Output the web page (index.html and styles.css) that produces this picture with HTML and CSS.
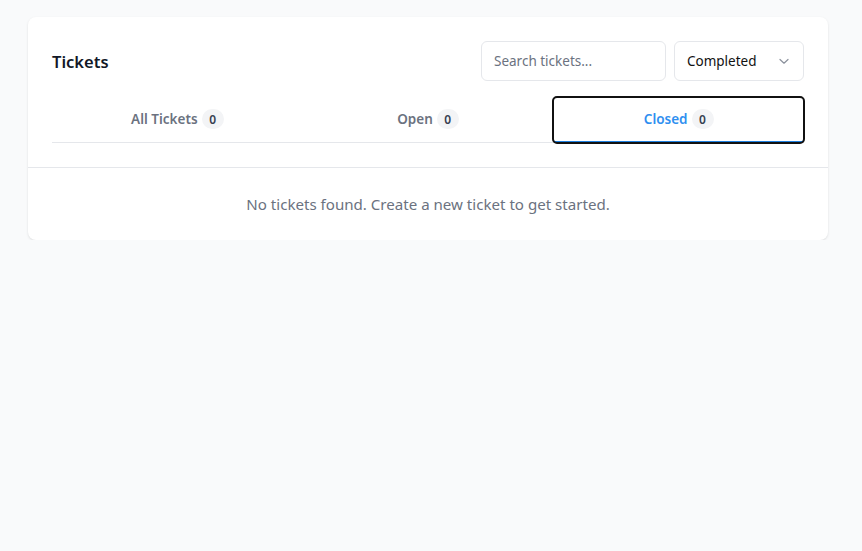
FILE: index.html
```html
<!DOCTYPE html>
<html lang="en">
<head>
<meta charset="utf-8">
<title>Tickets</title>
<link rel="stylesheet" href="styles.css">
</head>
<body>
<main class="page">
  <section class="card">
    <div class="card-header">
      <div class="toolbar">
        <h1 class="title">Tickets</h1>
        <div class="controls">
          <input class="search" type="text" placeholder="Search tickets...">
          <div class="select">
            <span>Completed</span>
            <svg class="chevron" width="12" height="12" viewBox="0 0 12 12" fill="none"><path d="M2 4.5 6 8.2l4-3.7" stroke="#8b919c" stroke-width="1.2" stroke-linecap="round" stroke-linejoin="round"/></svg>
          </div>
        </div>
      </div>
      <nav class="tabs">
        <button class="tab">All Tickets <span class="badge">0</span></button>
        <button class="tab">Open <span class="badge">0</span></button>
        <button class="tab active">Closed <span class="badge">0</span></button>
      </nav>
    </div>
    <div class="empty">No tickets found. Create a new ticket to get started.</div>
  </section>
</main>
</body>
</html>
```
FILE: styles.css
```css
* { box-sizing: border-box; }
html, body { margin: 0; padding: 0; }
body {
  background: #f9fafb;
  font-family: "Noto Sans", "Open Sans", sans-serif;
  color: #111827;
}
.page { padding: 17px 34px 0 28px; }
.card {
  width: 800px;
  background: #fff;
  border-radius: 8px;
  box-shadow: 0 1px 3px rgba(0,0,0,0.08), 0 1px 2px rgba(0,0,0,0.04);
}
.card-header {
  padding: 24px 24px 24px;
  border-bottom: 1px solid #e5e7eb;
}
.toolbar {
  display: flex;
  align-items: center;
  justify-content: space-between;
  height: 40px;
}
.title {
  margin: 0;
  font-size: 16.5px;
  line-height: 1;
  padding-top: 2px;
  font-weight: 600;
  color: #111827;
}
.controls { display: flex; gap: 8px; }
.search {
  width: 185px;
  height: 40px;
  border: 1px solid #e5e7eb;
  border-radius: 6px;
  padding: 0 12px;
  font-family: inherit;
  font-size: 13.5px;
  color: #111827;
  outline: none;
}
.search::placeholder { color: #6b7280; }
.select {
  width: 130px;
  height: 40px;
  border: 1px solid #e5e7eb;
  border-radius: 6px;
  padding: 0 13px 0 12px;
  display: flex;
  align-items: center;
  justify-content: space-between;
  font-size: 13.5px;
  color: #111;
}
.tabs {
  margin-top: 16px;
  display: grid;
  grid-template-columns: repeat(3, 1fr);
  border-bottom: 1px solid #e5e7eb;
}
.tab {
  height: 46px;
  background: none;
  border: none;
  border-bottom: 2px solid transparent;
  margin-bottom: -1px;
  display: flex;
  align-items: center;
  justify-content: center;
  gap: 4px;
  font-family: inherit;
  font-size: 13.5px;
  font-weight: 600;
  color: #6b7280;
  cursor: pointer;
  padding: 0;
}
.tab.active {
  color: #2f8ff0;
  border-bottom-color: #1d7fe0;
  outline: 2px solid #111;
  outline-offset: -1px;
  border-radius: 4px;
}
.badge {
  display: inline-flex;
  align-items: center;
  justify-content: center;
  min-width: 22px;
  height: 20px;
  padding: 0 7px;
  border-radius: 999px;
  background: #f3f4f6;
  color: #374151;
  font-size: 12px;
  font-weight: 600;
}
.empty {
  padding: 24px;
  text-align: center;
  font-size: 15.1px;
  line-height: 24px;
  color: #6b7280;
}
```
